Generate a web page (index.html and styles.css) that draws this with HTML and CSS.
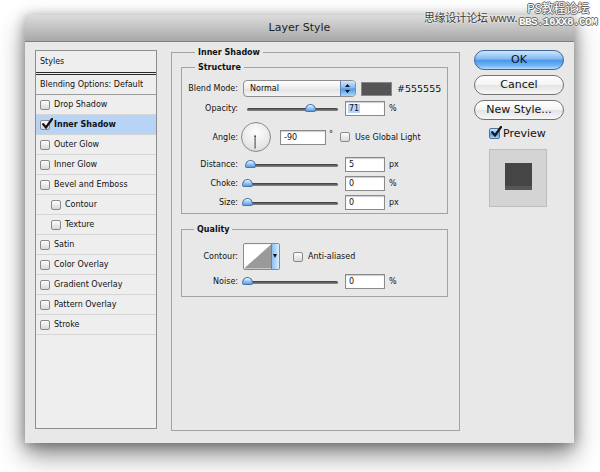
FILE: index.html
```html
<!DOCTYPE html>
<html>
<head>
<meta charset="utf-8">
<title>Layer Style</title>
<link rel="stylesheet" href="styles.css">
</head>
<body>
<div class="window">
  <div class="titlebar">Layer Style</div>
  <div class="content">
    <div class="styles-panel">
      <div class="sp-head">Styles</div>
      <div class="sp-blend">Blending Options: Default</div>
      <div class="sp-row"><span class="cb"></span>Drop Shadow</div>
      <div class="sp-row active"><span class="cb"><svg class="check" viewBox="0 0 12 12"><path d="M2.2 6.2 L5 9.5 L11 1" stroke="#151515" stroke-width="2.2" fill="none" stroke-linecap="round"/></svg></span><b>Inner Shadow</b></div>
      <div class="sp-row"><span class="cb"></span>Outer Glow</div>
      <div class="sp-row"><span class="cb"></span>Inner Glow</div>
      <div class="sp-row"><span class="cb"></span>Bevel and Emboss</div>
      <div class="sp-row sub"><span class="cb"></span>Contour</div>
      <div class="sp-row sub"><span class="cb"></span>Texture</div>
      <div class="sp-row"><span class="cb"></span>Satin</div>
      <div class="sp-row"><span class="cb"></span>Color Overlay</div>
      <div class="sp-row"><span class="cb"></span>Gradient Overlay</div>
      <div class="sp-row"><span class="cb"></span>Pattern Overlay</div>
      <div class="sp-row"><span class="cb"></span>Stroke</div>
    </div>

    <fieldset class="group outer">
      <legend>Inner Shadow</legend>
      <fieldset class="group structure">
        <legend>Structure</legend>
        <div class="row r-blend">
          <span class="lbl">Blend Mode:</span>
          <div class="select">Normal<span class="stepper"><svg viewBox="0 0 15 15" width="15" height="15"><path d="M5 6 L7.5 3 L10 6 Z M5 9 L7.5 12 L10 9 Z" fill="#111"/></svg></span></div>
          <span class="swatch"></span>
          <span class="hex">#555555</span>
        </div>
        <div class="row r-op">
          <span class="lbl">Opacity:</span>
          <div class="slider"><span class="track"></span><span class="thumb" style="left:62px"></span></div>
          <span class="field"><span class="sel">71</span></span>
          <span class="unit">%</span>
        </div>
        <div class="row r-angle">
          <span class="lbl">Angle:</span>
          <span class="dial"><svg viewBox="0 0 30 30" width="28" height="28"><line x1="14" y1="14" x2="14" y2="27.5" stroke="#333" stroke-width="1"/><circle cx="14" cy="14" r="0.9" fill="#333"/></svg></span>
          <span class="field angle">-90</span>
          <span class="deg">°</span>
          <span class="cb global"></span>
          <span class="cb-text">Use Global Light</span>
        </div>
        <div class="row r-dist">
          <span class="lbl">Distance:</span>
          <div class="slider"><span class="track"></span><span class="thumb" style="left:2px"></span></div>
          <span class="field">5</span>
          <span class="unit">px</span>
        </div>
        <div class="row r-choke">
          <span class="lbl">Choke:</span>
          <div class="slider"><span class="track"></span><span class="thumb" style="left:-1px"></span></div>
          <span class="field">0</span>
          <span class="unit">%</span>
        </div>
        <div class="row r-size">
          <span class="lbl">Size:</span>
          <div class="slider"><span class="track"></span><span class="thumb" style="left:-1px"></span></div>
          <span class="field">0</span>
          <span class="unit">px</span>
        </div>
      </fieldset>

      <fieldset class="group quality">
        <legend>Quality</legend>
        <div class="row r-contour">
          <span class="lbl">Contour:</span>
          <span class="contour"><svg class="curve" viewBox="0 0 28 25" width="28" height="25"><rect width="28" height="25" fill="#fff"/><path d="M0 25 L28 0 L28 25 Z" fill="#9a9a9a"/></svg><span class="drop"><svg viewBox="0 0 8 25" width="8" height="25"><path d="M2 10 L6 10 L4 14 Z" fill="#111"/></svg></span></span>
          <span class="cb anti"></span>
          <span class="cb-text">Anti-aliased</span>
        </div>
        <div class="row r-noise">
          <span class="lbl">Noise:</span>
          <div class="slider"><span class="track"></span><span class="thumb" style="left:-1px"></span></div>
          <span class="field">0</span>
          <span class="unit">%</span>
        </div>
      </fieldset>
    </fieldset>

    <div class="buttons">
      <div class="btn default">OK</div>
      <div class="btn">Cancel</div>
      <div class="btn">New Style...</div>
      <div class="preview"><span class="cb blue big"><svg class="check" viewBox="0 0 12 12"><path d="M2.2 6.2 L5 9.5 L11 1" stroke="#151515" stroke-width="2.2" fill="none" stroke-linecap="round"/></svg></span>Preview</div>
      <div class="pv-box"><span class="pv-sq"></span></div>
    </div>
  </div>
</div>

<div class="wm wm1">思缘设计论坛 www.</div>
<div class="wm wm2">PS教程论坛</div>
<div class="wm wm3">BBS.16XX8.COM</div>
</body>
</html>
```

FILE: styles.css
```css
* { box-sizing: border-box; }
html, body { margin: 0; padding: 0; }
body {
  width: 600px;
  height: 472px;
  background: #ffffff;
  font-family: "DejaVu Sans", sans-serif;
  font-size: 8px;
  color: #111111;
  overflow: hidden;
  position: relative;
}

.window {
  margin: 15px 0 0 25px;
  width: 549px;
  height: 428px;
  background: #e8e8e8;
  box-shadow: 0 12px 24px rgba(0, 0, 0, 0.45), 0 2px 12px rgba(0, 0, 0, 0.32);
}

.titlebar {
  height: 27px;
  background: linear-gradient(#dcdcdc, #a8a8a8);
  border-bottom: 1px solid #7e7e7e;
  text-align: center;
  font-size: 11px;
  line-height: 25px;
  color: #1e1e1e;
}

.content {
  display: flex;
  gap: 14px;
  padding: 4px 10px 0;
}

/* ---- styles list ---- */
.styles-panel {
  flex: none;
  width: 122px;
  height: 379px;
  margin-top: 4px;
  border: 1px solid #8e8e8e;
  background: #eeeeee;
}
.sp-head {
  height: 24px;
  padding-left: 4px;
  line-height: 21px;
  border-bottom: 3px double #2a2a2a;
}
.sp-blend {
  height: 20px;
  padding-left: 4px;
  line-height: 19px;
  border-bottom: 1px solid #9c9c9c;
}
.sp-row {
  height: 20px;
  display: flex;
  align-items: center;
  gap: 4px;
  padding-left: 4px;
  border-bottom: 1px solid #d5d5d5;
}
.sp-row.sub { padding-left: 15px; }
.sp-row.active { background: #b7d4f7; }

.cb {
  position: relative;
  flex: none;
  width: 10px;
  height: 10px;
  border: 1px solid #8a8a8a;
  border-radius: 2px;
  background: linear-gradient(#fdfdfd, #d8d8d8);
}
.cb .check {
  position: absolute;
  left: 0;
  top: -3px;
  width: 12px;
  height: 12px;
}
.cb.blue {
  background: linear-gradient(#d3e8fc, #6eaeee 50%, #4f98e6 55%, #a6d4fb);
  border-color: #4c6f98;
}
.cb.big { width: 11px; height: 11px; }

/* ---- fieldsets ---- */
.group {
  margin: 0;
  padding: 0;
  border: 1px solid #a2a2a2;
  min-width: 0;
}
.group > legend {
  padding: 0 3px;
  font-weight: bold;
  font-size: 8px;
  line-height: 13px;
}
.outer {
  flex: none;
  width: 289px;
  height: 385px;
  padding: 0 11px 0 9px;
}
.outer > legend { margin-left: 14px; }
.structure { margin-top: 2px; padding: 6px 0 3px; }
.structure > legend { margin-left: 13px; }
.quality { margin-top: 9px; padding: 7px 0 7px; }
.quality > legend { margin-left: 12px; }

.row { display: flex; align-items: center; }
.lbl {
  flex: none;
  width: 56px;
  margin-right: 5px;
  text-align: right;
}
.r-blend { height: 17px; }
.r-op { height: 15px; margin-top: 4px; }
.r-angle { height: 30px; margin-top: 6px; }
.r-dist { height: 15px; margin-top: 5px; }
.r-choke, .r-size { height: 15px; margin-top: 4px; }
.r-contour { height: 27px; }
.r-noise { height: 15px; margin-top: 4px; }

.select {
  position: relative;
  flex: none;
  width: 113px;
  height: 17px;
  padding-left: 6px;
  border: 1px solid #8d8d8d;
  border-radius: 4px;
  background: linear-gradient(#ffffff, #ececec 50%, #e2e2e2 51%, #f4f4f4);
  line-height: 15px;
  overflow: hidden;
}
.stepper {
  position: absolute;
  top: 0;
  right: 0;
  width: 15px;
  height: 15px;
  border-left: 1px solid #5f86b4;
  background: linear-gradient(#d3e8fc, #7cb6f0 48%, #4f98e6 52%, #a6d6fd);
}
.stepper svg { display: block; margin-left: -1px; }

.swatch {
  flex: none;
  width: 31px;
  height: 14px;
  margin-left: 5px;
  background: #555555;
  border: 1px solid #888888;
}
.hex { margin-left: 5px; font-size: 9.5px; }

.slider {
  position: relative;
  flex: none;
  width: 97px;
  height: 15px;
}
.slider .track {
  position: absolute;
  left: 4px;
  right: 2px;
  top: 7px;
  height: 3px;
  border-radius: 2px;
  background: linear-gradient(#3a3a3a, #8c8c8c);
}
.slider .thumb {
  position: absolute;
  top: 3px;
  width: 11px;
  height: 8px;
  border: 1px solid #4d74a8;
  border-radius: 50% 50% 2px 2px / 80% 80% 25% 25%;
  background: linear-gradient(#eaf4ff, #9cc9f5 50%, #5b9de6);
}

.field {
  flex: none;
  width: 40px;
  height: 15px;
  margin-left: 5px;
  padding-left: 3px;
  border: 1px solid #8a8a8a;
  background: #ffffff;
  box-shadow: inset 0 1px 1px rgba(0, 0, 0, 0.2);
  line-height: 13px;
}
.field .sel { background: #b5d5fd; padding: 0 1px; margin-left: -1px; }
.unit { margin-left: 4px; }

.dial {
  flex: none;
  width: 30px;
  height: 30px;
  margin-left: -2px;
  border: 1px solid #8a8a8a;
  border-radius: 50%;
  background: radial-gradient(circle at 50% 35%, #ffffff, #e6e6e6 65%, #cfcfcf);
}
.dial svg { display: block; }
.field.angle { width: 46px; margin-left: 9px; }
.deg { align-self: flex-start; margin: 8px 0 0 3px; }
.cb.global { margin-left: 7px; }
.cb-text { margin-left: 5px; }

.contour {
  flex: none;
  display: flex;
  width: 37px;
  height: 27px;
  border: 1px solid #8a8a8a;
  border-radius: 2px;
  overflow: hidden;
}
.contour .curve { display: block; }
.contour .drop {
  width: 8px;
  border-left: 1px solid #5f86b4;
  background: linear-gradient(90deg, #8cc0f2, #d8ecff);
}
.contour .drop svg { display: block; margin-left: -1px; }
.cb.anti { margin-left: 13px; }

/* ---- buttons ---- */
.buttons {
  flex: none;
  width: 90px;
  margin-top: 4px;
  display: flex;
  flex-direction: column;
}
.btn {
  height: 20px;
  border: 1px solid #727272;
  border-radius: 10px;
  background: linear-gradient(#ffffff, #f3f3f3 50%, #e4e4e4 52%, #f7f7f7);
  font-size: 11px;
  line-height: 18px;
  text-align: center;
  color: #111;
}
.btn + .btn { margin-top: 5px; }
.btn.default {
  border-color: #3f6796;
  background: linear-gradient(#cfe6fd, #7fb9f1 45%, #4b98e8 52%, #6fb3f2 80%, #aedcfe);
}
.preview {
  display: flex;
  align-items: center;
  gap: 3px;
  height: 11px;
  margin: 8px 0 0 15px;
  font-size: 11px;
}
.pv-box {
  width: 58px;
  height: 58px;
  margin: 10px 0 0 15px;
  background: #d4d4d4;
  border: 1px solid #bdbdbd;
  display: flex;
  align-items: center;
  justify-content: center;
}
.pv-sq {
  width: 27px;
  height: 27px;
  margin-top: -3px;
  background: #454545;
  box-shadow: inset 0 -4px 0 #565656;
}

/* ---- watermark ---- */
.wm {
  position: absolute;
  white-space: nowrap;
  font-family: "Noto Sans CJK SC", "DejaVu Sans", sans-serif;
}
.wm1 {
  left: 424px;
  top: 10px;
  font-size: 11px;
  letter-spacing: -0.4px;
  line-height: 15px;
  color: #3a3a3a;
  text-shadow: 0 0 2px #fff, 0 0 2px #fff;
}
.wm2 {
  left: 527px;
  top: 1px;
  font-size: 12px;
  line-height: 14px;
  color: #fdfdfd;
  text-shadow: 1px 0 0 #666, -1px 0 0 #666, 0 1px 0 #666, 0 -1px 0 #666;
}
.wm3 {
  left: 519px;
  top: 16px;
  font-family: "Liberation Mono", monospace;
  font-size: 11px;
  font-weight: bold;
  letter-spacing: -0.6px;
  line-height: 13px;
  color: #fdfdfd;
  text-shadow: 1px 0 0 #666, -1px 0 0 #666, 0 1px 0 #666, 0 -1px 0 #666;
}
```
